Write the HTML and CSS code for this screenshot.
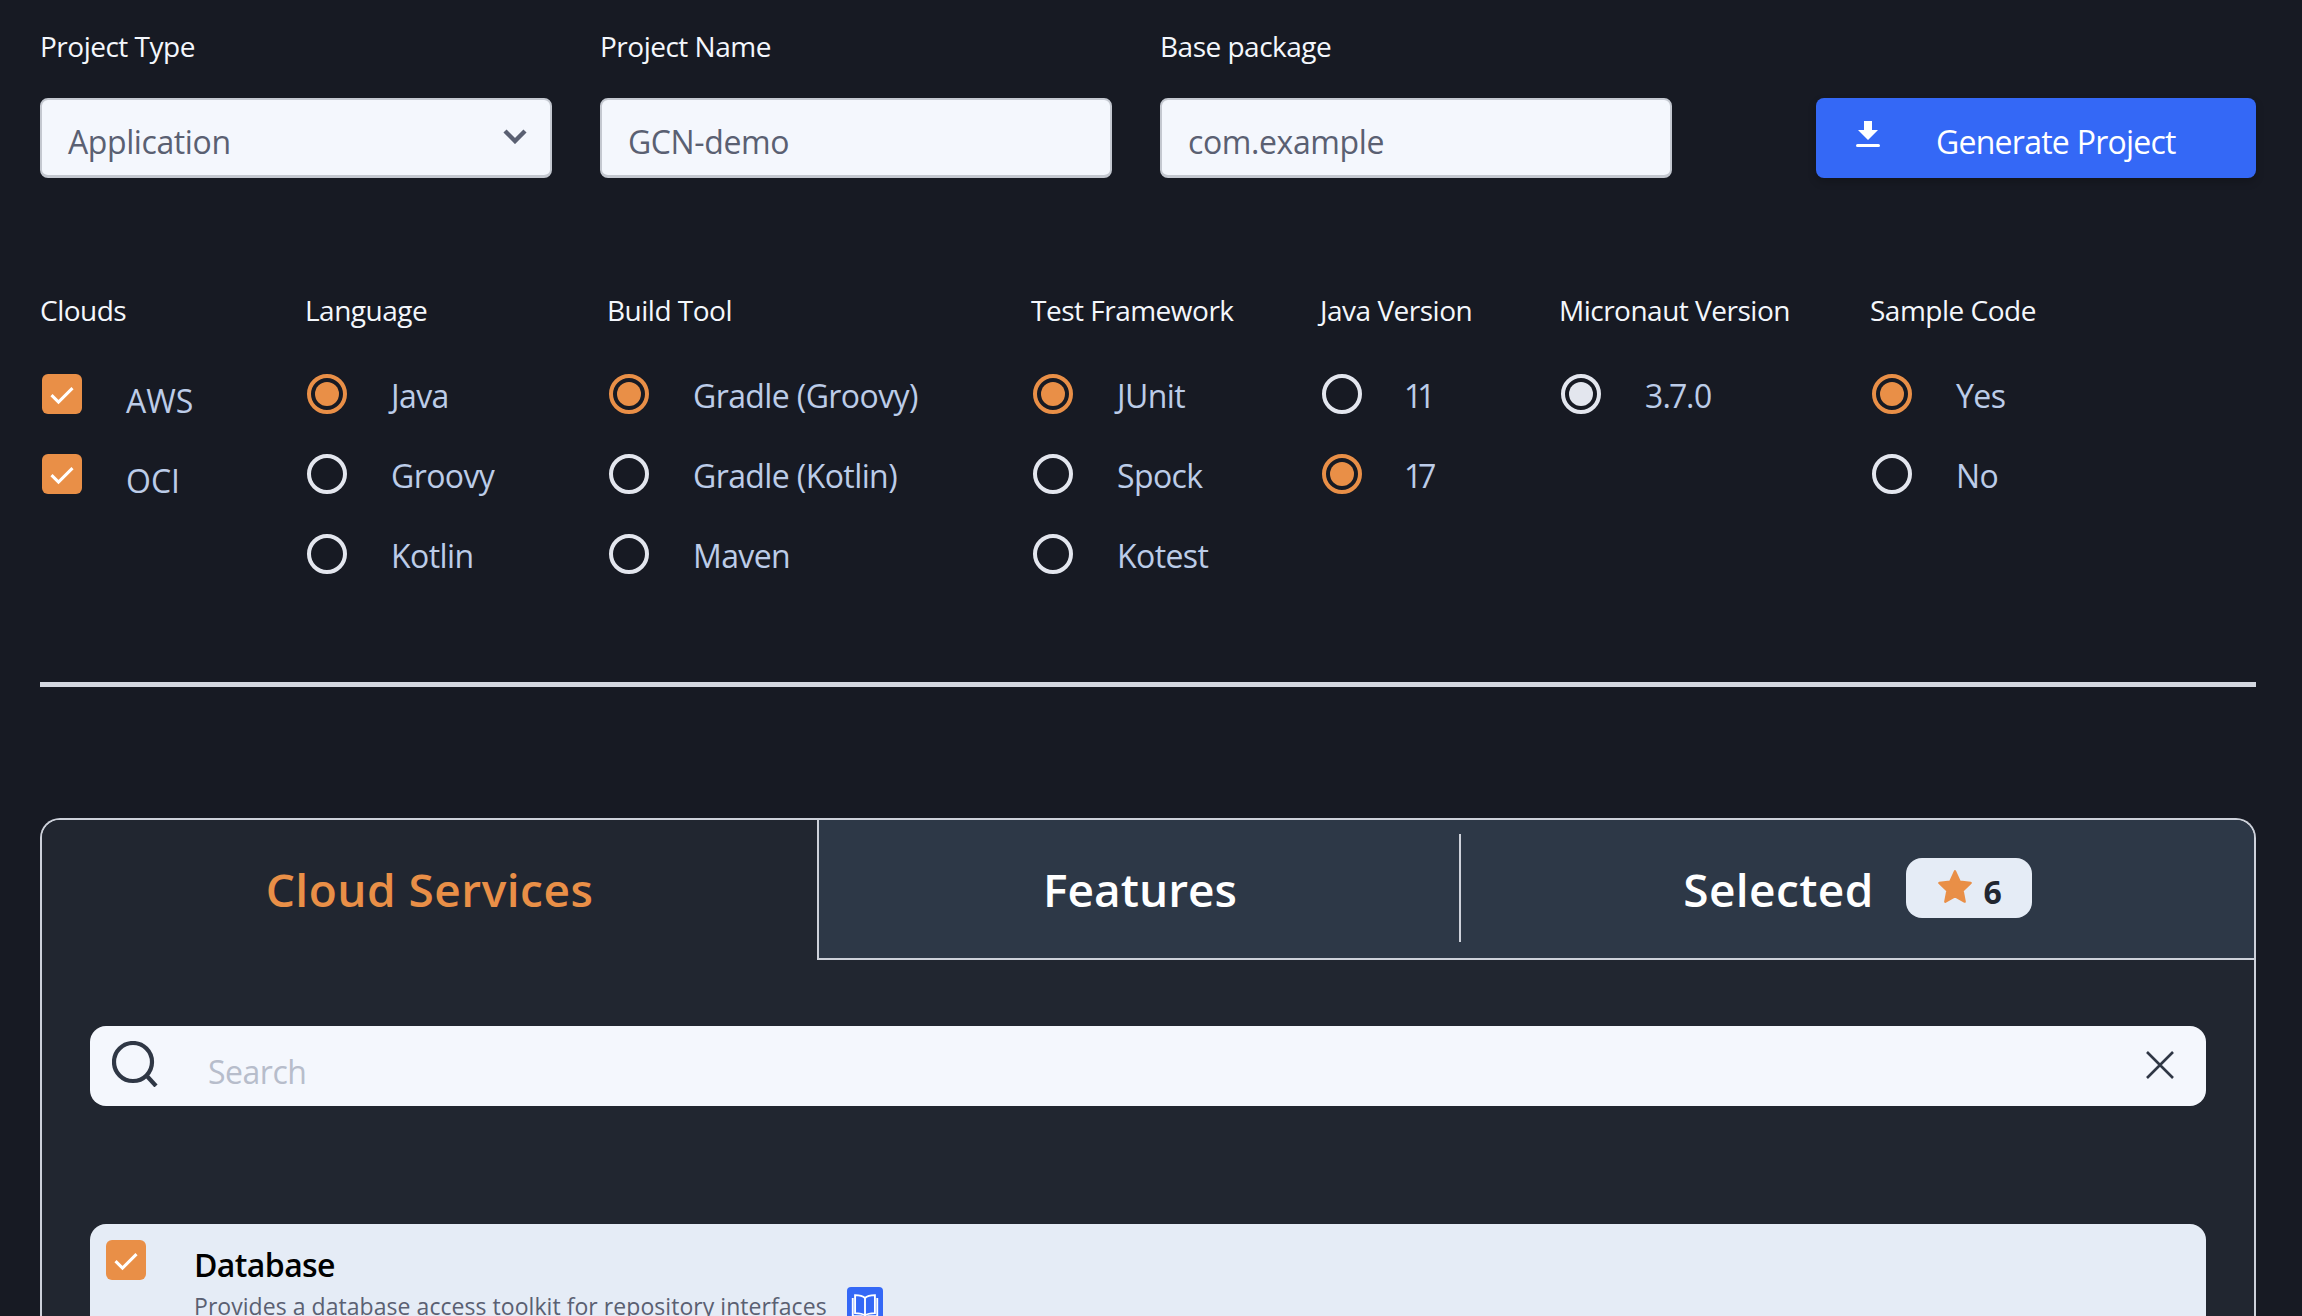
FILE: index.html
```html
<!DOCTYPE html>
<html lang="en">
<head>
	<meta charset="UTF-8">
	<title>Create Project</title>
	<link rel="stylesheet" href="styles.css">
</head>
<body>
	<!-- top fields -->
	<section class="fields">
		<div class="field">
			<label class="label">Project Type</label>
			<div class="box">
				<span class="box-text">Application</span>
				<svg class="chevron" viewBox="0 0 24 16"><path d="M2 3l10 10L22 3" fill="none" stroke="#5a6072" stroke-width="4.4"/></svg>
			</div>
		</div>
		<div class="field">
			<label class="label">Project Name</label>
			<div class="box"><span class="box-text">GCN-demo</span></div>
		</div>
		<div class="field">
			<label class="label">Base package</label>
			<div class="box"><span class="box-text">com.example</span></div>
		</div>
		<a href="javascript:;" class="generate">
			<svg class="download" viewBox="0 0 24 26"><path d="M8 0h8v9h6L12 19 2 9h6z" fill="#fff"/><rect y="23" width="24" height="3" rx="1.5" fill="#fff"/></svg>
			<span>Generate Project</span>
		</a>
	</section>

	<!-- options -->
	<section class="options">
		<div class="group group-clouds">
			<div class="label">Clouds</div>
			<div class="opt opt-low"><span class="check"><svg viewBox="0 0 24 24"><path d="M3 13l6 6L21 7" fill="none" stroke="#fff" stroke-width="2.600"/></svg></span><span class="opt-text">AWS</span></div>
			<div class="opt opt-low"><span class="check"><svg viewBox="0 0 24 24"><path d="M3 13l6 6L21 7" fill="none" stroke="#fff" stroke-width="2.600"/></svg></span><span class="opt-text">OCI</span></div>
		</div>
		<div class="group group-lang">
			<div class="label">Language</div>
			<div class="opt"><span class="radio on"></span><span class="opt-text">Java</span></div>
			<div class="opt"><span class="radio"></span><span class="opt-text">Groovy</span></div>
			<div class="opt"><span class="radio"></span><span class="opt-text">Kotlin</span></div>
		</div>
		<div class="group group-build">
			<div class="label">Build Tool</div>
			<div class="opt"><span class="radio on"></span><span class="opt-text">Gradle (Groovy)</span></div>
			<div class="opt"><span class="radio"></span><span class="opt-text">Gradle (Kotlin)</span></div>
			<div class="opt"><span class="radio"></span><span class="opt-text">Maven</span></div>
		</div>
		<div class="group group-test">
			<div class="label">Test Framework</div>
			<div class="opt"><span class="radio on"></span><span class="opt-text">JUnit</span></div>
			<div class="opt"><span class="radio"></span><span class="opt-text">Spock</span></div>
			<div class="opt"><span class="radio"></span><span class="opt-text">Kotest</span></div>
		</div>
		<div class="group group-java">
			<div class="label">Java Version</div>
			<div class="opt"><span class="radio"></span><span class="opt-text">11</span></div>
			<div class="opt"><span class="radio on"></span><span class="opt-text">17</span></div>
		</div>
		<div class="group group-mn">
			<div class="label">Micronaut Version</div>
			<div class="opt"><span class="radio fixed"></span><span class="opt-text">3.7.0</span></div>
		</div>
		<div class="group">
			<div class="label">Sample Code</div>
			<div class="opt"><span class="radio on"></span><span class="opt-text">Yes</span></div>
			<div class="opt"><span class="radio"></span><span class="opt-text">No</span></div>
		</div>
	</section>

	<hr class="rule">

	<!-- tabbed panel -->
	<section class="panel">
		<div class="tabs">
			<div class="tab tab-active">Cloud Services</div>
			<div class="tab tab-features">Features</div>
			<div class="tab tab-selected">
				<span>Selected</span>
				<span class="badge">
					<svg class="star" viewBox="0 0 24 24"><path d="M12 1.500l3.200 6.900 7.300.9-5.400 5.100 1.400 7.400-6.500-3.700-6.500 3.700 1.400-7.400-5.400-5.100 7.300-.9z" fill="#e98f47" stroke="#e98f47" stroke-width="1.500" stroke-linejoin="round"/></svg>
					<b>6</b>
				</span>
			</div>
		</div>
		<div class="panel-body">
			<div class="search">
				<svg class="search-icon" viewBox="0 0 46 46"><circle cx="21" cy="21" r="19" fill="none" stroke="#2f3745" stroke-width="4.200"/><path d="M34 34l10 11" stroke="#2f3745" stroke-width="4.200"/></svg>
				<span class="search-text">Search</span>
				<svg class="clear" viewBox="0 0 28 28"><path d="M1 1l26 26M27 1L1 27" stroke="#2f3745" stroke-width="2.600"/></svg>
			</div>
			<div class="item">
				<span class="check"><svg viewBox="0 0 24 24"><path d="M3 13l6 6L21 7" fill="none" stroke="#fff" stroke-width="2.600"/></svg></span>
				<div class="item-body">
					<div class="item-title">Database</div>
					<div class="item-desc">
						<span>Provides a database access toolkit for repository interfaces</span>
						<span class="doc"><svg viewBox="0 0 24 24"><path d="M12 6C10 4 7 3.500 3.500 3.500V19c3.500 0 6.500.5 8.500 2 2-1.500 5-2 8.500-2V3.500C17 3.500 14 4 12 6zM12 6v15M1.500 6v15.500H10M22.500 6v15.500H14" fill="none" stroke="#fff" stroke-width="1.600"/></svg></span>
					</div>
				</div>
			</div>
		</div>
	</section>
</body>
</html>
```

FILE: styles.css
```css
*{margin: 0;padding: 0;box-sizing: border-box;}
html,body{height: 1316px;overflow: hidden;}
body{background: #171a23;font-family: "Open Sans", "Noto Sans", sans-serif;color: #f4f7fc;padding: 0 46px 0 40px;}

.label{font-size: 28px;line-height: 38px;letter-spacing: -.5px;color: #f4f7fc;display: block;}

/* top fields */
.fields{display: flex;padding-top: 27px;align-items: flex-end;}
.field{width: 512px;margin-right: 48px;}
.field .label{margin-bottom: 33px;}
.box{height: 80px;background: #f4f7fd;border: 2px solid #c4c8d0;border-bottom-width: 3px;border-radius: 8px;padding: 8px 26px 0;display: flex;align-items: center;justify-content: space-between;}
.box-text{font-size: 32px;letter-spacing: -.4px;color: #5a6072;}
.chevron{width: 24px;height: 16px;margin: -12px -3px 0 0;}
.generate{width: 440px;height: 80px;margin-left: 96px;background: #3468f6;border-radius: 8px;color: #fff;text-decoration: none;font-size: 32px;letter-spacing: -.75px;display: flex;align-items: center;padding: 0 0 0 40px;box-shadow: 0 4px 8px rgba(0,0,0,.2);}
.download{width: 24px;height: 26px;margin: -8px 0 0;}
.generate span{margin: 7px 0 0 56px;}

/* options */
.options{display: flex;margin-top: 113px;height: 391px;}
.group{display: flex;flex-direction: column;}
.group-clouds{width: 265px;}
.group-lang{width: 302px;}
.group-build{width: 424px;}
.group-test{width: 289px;}
.group-java{width: 239px;}
.group-mn{width: 311px;}
.group .label{margin-bottom: 45px;}
.opt{display: flex;align-items: center;height: 40px;margin-bottom: 40px;padding-left: 2px;}
.opt-text{font-size: 32px;letter-spacing: -.6px;font-variant-numeric: proportional-nums;color: #bccce8;margin-left: 44px;line-height: 40px;padding-top: 4px;white-space: nowrap;}
.opt-low .opt-text{padding-top: 13px;letter-spacing: 0;}
.check{display: block;width: 40px;height: 40px;background: #e98f47;border-radius: 6px;flex: none;padding: 6px;}
.check svg{display: block;width: 28px;height: 28px;}
.radio{display: block;width: 40px;height: 40px;border: 4px solid #e3e6ee;border-radius: 50%;flex: none;}
.radio.on{border-color: #e98f47;padding: 4px;}
.radio.on::after,.radio.fixed::after{content: "";display: block;width: 24px;height: 24px;border-radius: 50%;background: #e98f47;}
.radio.fixed{padding: 4px;}
.radio.fixed::after{background: #e3e6ee;}

.rule{border: 0;height: 5px;background: #d4d7e0;width: 2216px;}

/* panel */
.panel{width: 2216px;margin-top: 131px;height: 560px;background: #212630;border: 2px solid #cdd1da;border-bottom: 0;border-radius: 20px 20px 0 0;overflow: hidden;}
.tabs{display: flex;height: 140px;}
.tab{display: flex;align-items: center;justify-content: center;font-size: 46px;font-weight: 600;color: #fff;background: #2d3847;border-bottom: 2px solid #cdd1da;}
.tab-active{width: 777px;background: #212630;color: #e98f47;border-right: 2px solid #cdd1da;border-bottom: 0;padding-bottom: 2px;letter-spacing: .5px;}
.tab-features{width: 642px;position: relative;}
.tab-features::after{content: "";position: absolute;right: 0;top: 14px;bottom: 16px;width: 2px;background: #cdd1da;}
.tab-selected{flex: 1;letter-spacing: .4px;}
.badge{display: flex;align-items: center;justify-content: center;width: 126px;height: 60px;margin: -2px 0 0 32px;background: #e5ecf6;border-radius: 16px;font-size: 32px;color: #212630;}
.badge b{font-weight: 700;margin: 6px 0 0 10px;}
.star{width: 36px;height: 36px;margin: -2px 0 0 2px;}

.panel-body{padding: 66px 48px 0;}
.search{height: 80px;background: #f4f7fd;border-radius: 16px;display: flex;align-items: center;padding: 0 32px 0 22px;}
.search-icon{width: 46px;height: 46px;flex: none;margin-top: -4px;}
.search-text{flex: 1;font-size: 32px;letter-spacing: -.5px;color: #b7bdcb;margin: 10px 0 0 50px;}
.clear{width: 28px;height: 28px;flex: none;margin-top: -2px;}
.item{margin-top: 118px;height: 200px;background: #e5ecf6;border-radius: 16px;display: flex;padding: 16px;}
.item-body{margin-left: 48px;}
.item-title{font-size: 32px;font-weight: 600;letter-spacing: -.6px;color: #000;line-height: 44px;margin-top: 3px;}
.item-desc{font-size: 23px;letter-spacing: .05px;color: #5a6072;display: flex;align-items: flex-start;line-height: 36px;margin-top: 1px;}
.doc{display: block;width: 36px;height: 36px;background: #3468f6;border-radius: 4px;margin: -1px 0 0 20px;padding: 4px;}
.doc svg{display: block;width: 28px;height: 28px;}
```
